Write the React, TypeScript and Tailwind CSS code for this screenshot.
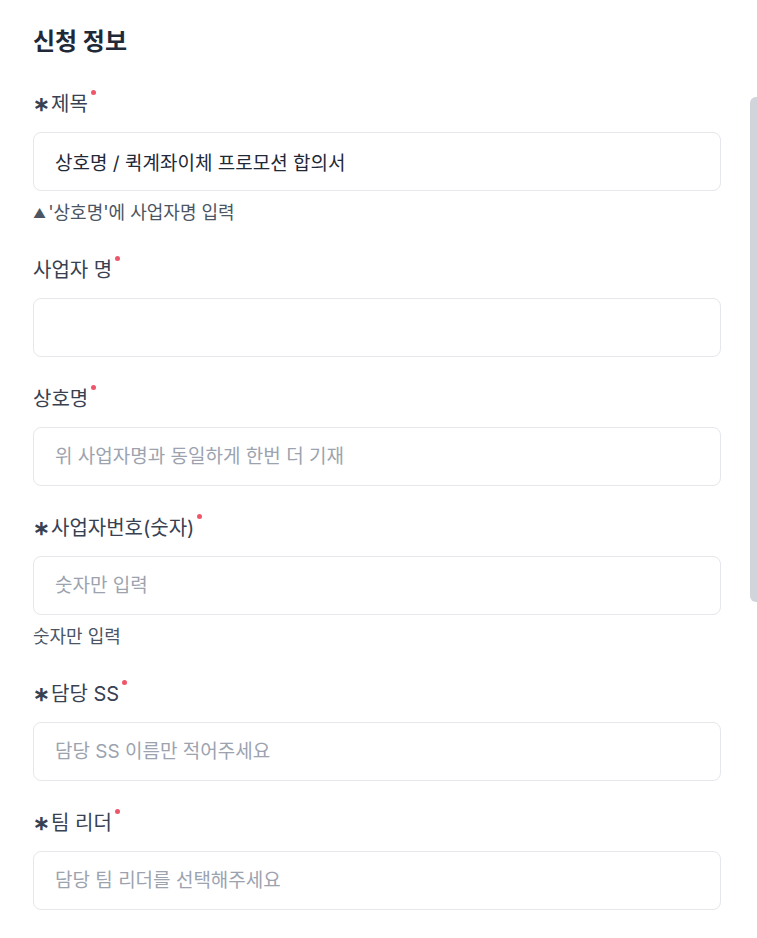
import React from 'react';

type Field = {
  label: string;
  star?: boolean;
  value?: string;
  placeholder?: string;
  help?: React.ReactNode;
};

const FIELDS: Field[] = [
  {
    label: '제목',
    star: true,
    value: '상호명 / 퀵계좌이체 프로모션 합의서',
    help: (
      <>
        <span className="mr-[2px] inline-block align-[1px] text-[13px] text-[#4b5563]">▲</span>
        '상호명'에 사업자명 입력
      </>
    ),
  },
  { label: '사업자 명' },
  { label: '상호명', placeholder: '위 사업자명과 동일하게 한번 더 기재' },
  { label: '사업자번호(숫자)', star: true, placeholder: '숫자만 입력', help: '숫자만 입력' },
  { label: '담당 SS', star: true, placeholder: '담당 SS 이름만 적어주세요' },
  { label: '팀 리더', star: true, placeholder: '담당 팀 리더를 선택해주세요' },
];

const font = { fontFamily: 'Inter, "Noto Sans CJK KR", sans-serif' };

const FormField: React.FC<{ field: Field }> = ({ field }) => (
  <div className="flex flex-col">
    <label className="flex items-start text-[20px] leading-[30px] text-[#374151]">
      {field.star && <span className="mr-[1px] font-bold">∗</span>}
      <span>{field.label}</span>
      <span className="ml-[3px] mt-[1px] h-[5px] w-[5px] rounded-full bg-[#f0566a]" />
    </label>
    <input
      readOnly
      value={field.value ?? ''}
      placeholder={field.placeholder}
      className="mt-[13px] h-[59px] w-full rounded-[8px] border border-[#e5e7eb] bg-white px-[21px] text-[19px] text-[#1f2937] placeholder:text-[#9ca3af] outline-none"
      style={font}
    />
    {field.help && (
      <p className="mt-[10px] mb-[3px] text-[18px] leading-[24px] text-[#4b5563]">{field.help}</p>
    )}
  </div>
);

export default function App() {
  return (
    <div className="relative min-h-[938px] w-[757px] overflow-hidden bg-white" style={font}>
      <div className="pl-[33px] pr-[36px] pt-[26px] pb-[28px]">
        <h2 className="text-[24px] font-bold leading-[32px] text-[#1f2937]">신청 정보</h2>
        <div className="mt-[31px] flex flex-col gap-[27px]">
          {FIELDS.map(f => (
            <FormField key={f.label} field={f} />
          ))}
        </div>
      </div>
      {/* scrollbar thumb */}
      <div className="absolute right-0 top-[97px] h-[505px] w-[7px] rounded-l-[6px] bg-[#d1d5db]" />
    </div>
  );
}
